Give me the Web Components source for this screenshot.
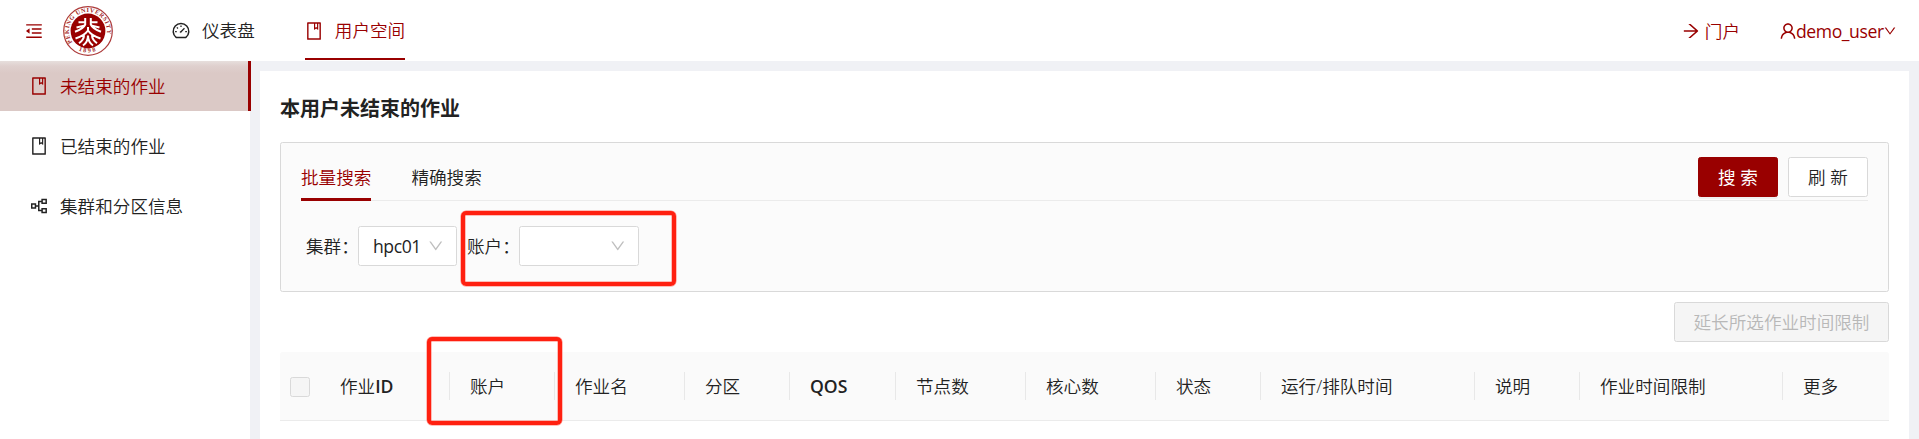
<!DOCTYPE html>
<html lang="zh-CN">
<head>
<meta charset="utf-8">
<title>本用户未结束的作业</title>
<style>
html,body{margin:0;height:100%;overflow:hidden}
body{font-family:"Open Sans","Noto Sans CJK SC",sans-serif;font-size:17.6px;font-weight:350;line-height:27.5px;color:#222;background:#f0f1f5;--brand:#990000}
</style>
</head>
<body>
<job-app></job-app>
<script>
const define=(name,html,after)=>customElements.define(name,class extends HTMLElement{
  constructor(){super();this.attachShadow({mode:'open'}).innerHTML=typeof html==='function'?'':html}
  connectedCallback(){if(typeof html==='function')this.shadowRoot.innerHTML=html(this);if(after)after(this)}
});
const icons={
 book:'<path d="M832 64H192c-17.7 0-32 14.3-32 32v832c0 17.7 14.3 32 32 32h640c17.7 0 32-14.3 32-32V96c0-17.7-14.3-32-32-32zm-260 72h96v209.9L621.5 312 572 347.4V136zm220 752H232V136h280v296.9c0 3.3 1 6.6 3 9.3a15.9 15.9 0 0022.3 3.7l83.8-59.9 81.4 59.4c2.7 2 6 3.1 9.4 3.1 8.8 0 16-7.2 16-16V136h64v752z"/>',
 user:'<path d="M858.5 763.6a374 374 0 00-80.6-119.5 375.63 375.63 0 00-119.5-80.6c-.4-.2-.8-.3-1.2-.5C719.5 518 760 444.7 760 362c0-137-111-248-248-248S264 225 264 362c0 82.7 40.5 156 102.8 201.1-.4.2-.8.3-1.2.5-44.8 18.9-85 46-119.5 80.6a375.63 375.63 0 00-80.6 119.5A371.7 371.7 0 00136 901.8a8 8 0 008 8.2h60c4.4 0 7.9-3.5 8-7.8 2-77.2 33-149.5 87.8-204.3 56.7-56.7 132-87.9 212.2-87.9s155.5 31.2 212.2 87.9C779 752.7 810 825 812 902.2c.1 4.4 3.6 7.8 8 7.8h60a8 8 0 008-8.2c-1-47.8-10.9-94.3-29.5-138.2zM512 534c-45.9 0-89.1-17.9-121.6-50.4S340 407.9 340 362c0-45.9 17.9-89.1 50.4-121.6S466.1 190 512 190s89.1 17.9 121.6 50.4S684 316.1 684 362c0 45.9-17.9 89.1-50.4 121.6S557.9 534 512 534z"/>',
 down:'<path d="M884 256h-75c-5.1 0-9.9 2.5-12.9 6.6L512 654.2 227.9 262.6c-3-4.1-7.8-6.6-12.9-6.6h-75c-6.5 0-10.3 7.4-6.5 12.7l352.6 486.1c12.8 17.6 39 17.6 51.7 0l352.6-486.1c3.9-5.3.1-12.7-6.4-12.7z"/>',
 arrow:'<path d="M869 487.8L491.2 159.9c-2.9-2.5-6.6-3.9-10.5-3.9h-88.5c-7.4 0-10.8 9.2-5.2 14l350.2 304H152c-4.4 0-8 3.6-8 8v60c0 4.4 3.6 8 8 8h585.1L386.9 854c-5.6 4.9-2.2 14 5.2 14h91.5c1.9 0 3.8-.7 5.2-2L869 536.2a32.07 32.07 0 000-48.4z"/>',
 fold:'<path d="M408 442h480c4.4 0 8-3.6 8-8v-56c0-4.4-3.6-8-8-8H408c-4.4 0-8 3.6-8 8v56c0 4.4 3.6 8 8 8zm-8 204c0 4.4 3.6 8 8 8h480c4.4 0 8-3.6 8-8v-56c0-4.4-3.6-8-8-8H408c-4.4 0-8 3.6-8 8v56zm504-486H120c-4.4 0-8 3.6-8 8v56c0 4.4 3.6 8 8 8h784c4.4 0 8-3.6 8-8v-56c0-4.4-3.6-8-8-8zm0 632H120c-4.4 0-8 3.6-8 8v56c0 4.4 3.6 8 8 8h784c4.4 0 8-3.6 8-8v-56c0-4.4-3.6-8-8-8zM115.4 518.9L271.7 642c5.8 4.6 14.4.5 14.4-6.9V388.9c0-7.4-8.5-11.5-14.4-6.9L115.4 505.1a8.74 8.74 0 000 13.8z"/>',
 dash:'<g fill="none" stroke="currentColor" stroke-width="76"><path d="M262 840A400 400 0 1 1 762 840Z" stroke-linejoin="round"/><path d="M512 225v85M210 540h85M729 540h85M300 328l56 56M500 560L690 375" stroke-width="66"/><circle cx="490" cy="565" r="28" stroke-width="40"/></g>',
 tree:'<g fill="none" stroke="currentColor" stroke-width="76"><path d="M140 412h190v200H140zM670 185h210v190H670zM670 650h210v190H670zM330 512h170M670 280H500v465h170"/></g>'
};
define('ui-icon',el=>`<style>:host{display:inline-flex;flex:none;width:var(--size,20px);height:var(--size,20px)}svg{width:100%;height:100%;fill:currentColor}</style><svg viewBox="0 0 1024 1024">${icons[el.getAttribute('name')]}</svg>`);

define('school-logo',`<style>:host{display:block;width:50px;height:50px}svg{display:block}text{font:600 6.2px "Liberation Serif",serif;fill:#a31f1f;letter-spacing:.75px}</style>
<svg width="50" height="50" viewBox="0 0 50 50"><circle cx="25" cy="25" r="24.3" fill="#fff" stroke="#ad3a3a" stroke-width="1.2"/><circle cx="25" cy="25" r="17.4" fill="#990000"/>
<defs><path id="top" d="M9.7 36.3A19 19 0 1 1 40.3 36.3"/><path id="bottom" d="M10 40.5A21.8 21.8 0 0 0 40 40.5"/></defs>
<text><textPath href="#top" textLength="75">PEKING UNIVERSITY</textPath></text><text style="letter-spacing:1.8px"><textPath href="#bottom" startOffset="50%" text-anchor="middle">1898</textPath></text>
<g fill="none" stroke="#fff" stroke-width="2"><path d="M22.2 12V18.5Q20.5 22.5 12 25.8M27.8 12V18.5Q29.5 22.5 38 25.8M15.5 16.2H22M34.5 16.2H28M13.5 21.5L21 19.6M36.5 21.5L29 19.6M25 21V24.5Q21.5 29.5 12.5 32.5M25 24.5Q28.5 29.5 37.5 32.5M21 29.2Q21 33.5 16 37.2M29 29.2Q29 33.5 34 37.2M20 39.5Q25 36 25 29.5Q25 36 30 39.5"/></g></svg>`);

define('nav-item',`<style>:host{display:flex;align-items:center;box-sizing:border-box;border-bottom:2px solid transparent}
:host([active]){color:var(--brand);border-color:var(--brand)}ui-icon{margin:3px 11px 0 -1px}span{transform:translateY(2px)}</style><ui-icon></ui-icon><span><slot></slot></span>`,el=>{const i=el.shadowRoot.querySelector('ui-icon');const n=document.createElement('ui-icon');n.setAttribute('name',el.getAttribute('icon'));i.replaceWith(n)});

define('app-header',`<style>:host{display:flex;align-items:center;height:61px;background:#fff;color:#222;padding:0 24px}
.red{color:var(--brand);display:flex;align-items:center}.logo{margin:1px 0 0 19px}nav{display:flex;gap:50px;margin-left:59px;align-self:flex-start}nav-item{height:60px}.sp{flex:1}.portal{gap:4px;margin-right:38px}.user{width:117px}.red span{margin-top:2px}.user span{letter-spacing:-.42px;font-weight:400}</style>
<ui-icon class="red" name="fold"></ui-icon><school-logo class="logo"></school-logo>
<nav><nav-item icon="dash">仪表盘</nav-item><nav-item icon="book" active>用户空间</nav-item></nav><div class="sp"></div>
<div class="red portal"><ui-icon name="arrow"></ui-icon><span>门户</span></div><div class="red user"><ui-icon name="user" style="margin-right:-2px"></ui-icon><span>demo_user</span><ui-icon name="down" style="--size:14px;margin-left:-1px"></ui-icon></div>`);

define('side-item',el=>`<style>:host{display:flex;align-items:center;box-sizing:border-box;height:50px;margin-bottom:10px;padding-left:29px;width:251px;gap:11px}
:host([active]){color:var(--brand);border-right:3px solid var(--brand);background:linear-gradient(#e7dfdd,#dfd0ce 5px,#dbc9c6 12px)}span{margin-top:2px}</style><ui-icon name="${el.getAttribute('icon')}"></ui-icon><span><slot></slot></span>`);
define('side-menu',`<style>:host{display:block;width:250px;background:#fff}</style><side-item icon="book" active>未结束的作业</side-item><side-item icon="book">已结束的作业</side-item><side-item icon="tree">集群和分区信息</side-item>`);

define('ui-button',`<style>:host{display:flex;align-items:center;justify-content:center;box-sizing:border-box;height:40px;padding:1px 18px 0;border:1px solid #d9d9d9;border-radius:2.5px;background:#fff;white-space:nowrap}
:host([two]){width:80px}:host([primary]){background:var(--brand);border-color:var(--brand);color:#fff;font-weight:400;box-shadow:0 2px 0 rgba(0,0,0,.045)}
:host([disabled]){background:#f5f5f5;color:#b8b8b8;width:215px}</style><slot></slot>`);
define('ui-select',`<style>:host{display:flex;align-items:center;justify-content:space-between;box-sizing:border-box;height:40px;padding:0 12px 0 14px;border:1px solid #d9d9d9;border-radius:2.5px;background:#fff}ui-icon{color:#bfbfbf;--size:17.5px}span{margin-top:2px;letter-spacing:-.45px;font-weight:400}</style><span><slot></slot></span><ui-icon name="down"></ui-icon>`);

define('search-panel',`<style>:host{display:block;box-sizing:border-box;height:150px;border:1px solid #d9d9d9;border-radius:2.5px;background:#fbfbfb;padding:14px 20px}
.bar{display:flex;height:43px;border-bottom:1px solid #ebebeb}.tab{height:44px;line-height:41px;margin-right:40px;box-sizing:border-box}.on{color:var(--brand);border-bottom:3px solid var(--brand)}.btns{margin-left:auto;display:flex;gap:10px}
.form{display:flex;align-items:center;margin:25px 0 0 5px;height:40px}.label{width:52px;white-space:nowrap;margin-top:2px}.label.two{margin-left:10px}</style>
<div class="bar"><div class="tab on">批量搜索</div><div class="tab">精确搜索</div><div class="btns"><ui-button two primary>搜 索</ui-button><ui-button two>刷 新</ui-button></div></div>
<div class="form"><span class="label">集群：</span><ui-select style="width:99px">hpc01</ui-select><span class="label two">账户：</span><ui-select style="width:120px"></ui-select></div>`);

define('table-column',`<style>:host{display:flex;align-items:center;box-sizing:border-box;padding-left:20px}span{flex:1;white-space:nowrap;margin-top:2px}i{width:1px;height:28px;background:#e8e8e8}:host([last]) i{display:none}</style><span><slot></slot></span><i></i>`);
define('job-table',`<style>:host{display:grid;grid-template-columns:40px 130px 105px 130px 105px 106px 130px 130px 105px 214px 105px 203px 1fr;height:68px;background:#fafafa;border-bottom:1px solid #ebebeb;border-radius:2.5px 2.5px 0 0}.check{align-self:center;margin-left:10px;width:20px;height:20px;box-sizing:border-box;border:1px solid #d9d9d9;border-radius:2.5px;background:#f5f5f5;margin-top:2px}.m{font-weight:550}</style>
<div class="check"></div><table-column>作业<b class="m">ID</b></table-column><table-column>账户</table-column><table-column>作业名</table-column><table-column>分区</table-column><table-column><b class="m">QOS</b></table-column><table-column>节点数</table-column><table-column>核心数</table-column><table-column>状态</table-column><table-column>运行/排队时间</table-column><table-column>说明</table-column><table-column>作业时间限制</table-column><table-column last>更多</table-column>`);

define('mark-box',`<style>:host{position:absolute;box-sizing:border-box;border:4px solid #ff2010;border-radius:5px;box-shadow:0 0 0 .5px #ff8077,inset 0 0 0 .5px #ff8077}</style>`);
define('job-app',`<style>:host{display:flex;flex-direction:column;height:439px;position:relative;overflow:hidden}.body{display:flex;flex:1}main{flex:1;margin:10px 10px 0;background:#fff;padding:21px 20px 0}h1{font-size:20px;font-weight:700;line-height:34px;margin:0 0 16px}.actions{display:flex;justify-content:flex-end;margin:10px 0 10px}</style>
<app-header></app-header><div class="body"><side-menu></side-menu><main><h1>本用户未结束的作业</h1><search-panel></search-panel><div class="actions"><ui-button disabled>延长所选作业时间限制</ui-button></div><job-table></job-table></main></div>
<mark-box style="left:460.5px;top:210.5px;width:215px;height:75px"></mark-box><mark-box style="left:427px;top:337px;width:135px;height:88px"></mark-box>`);
</script>
</body>
</html>
